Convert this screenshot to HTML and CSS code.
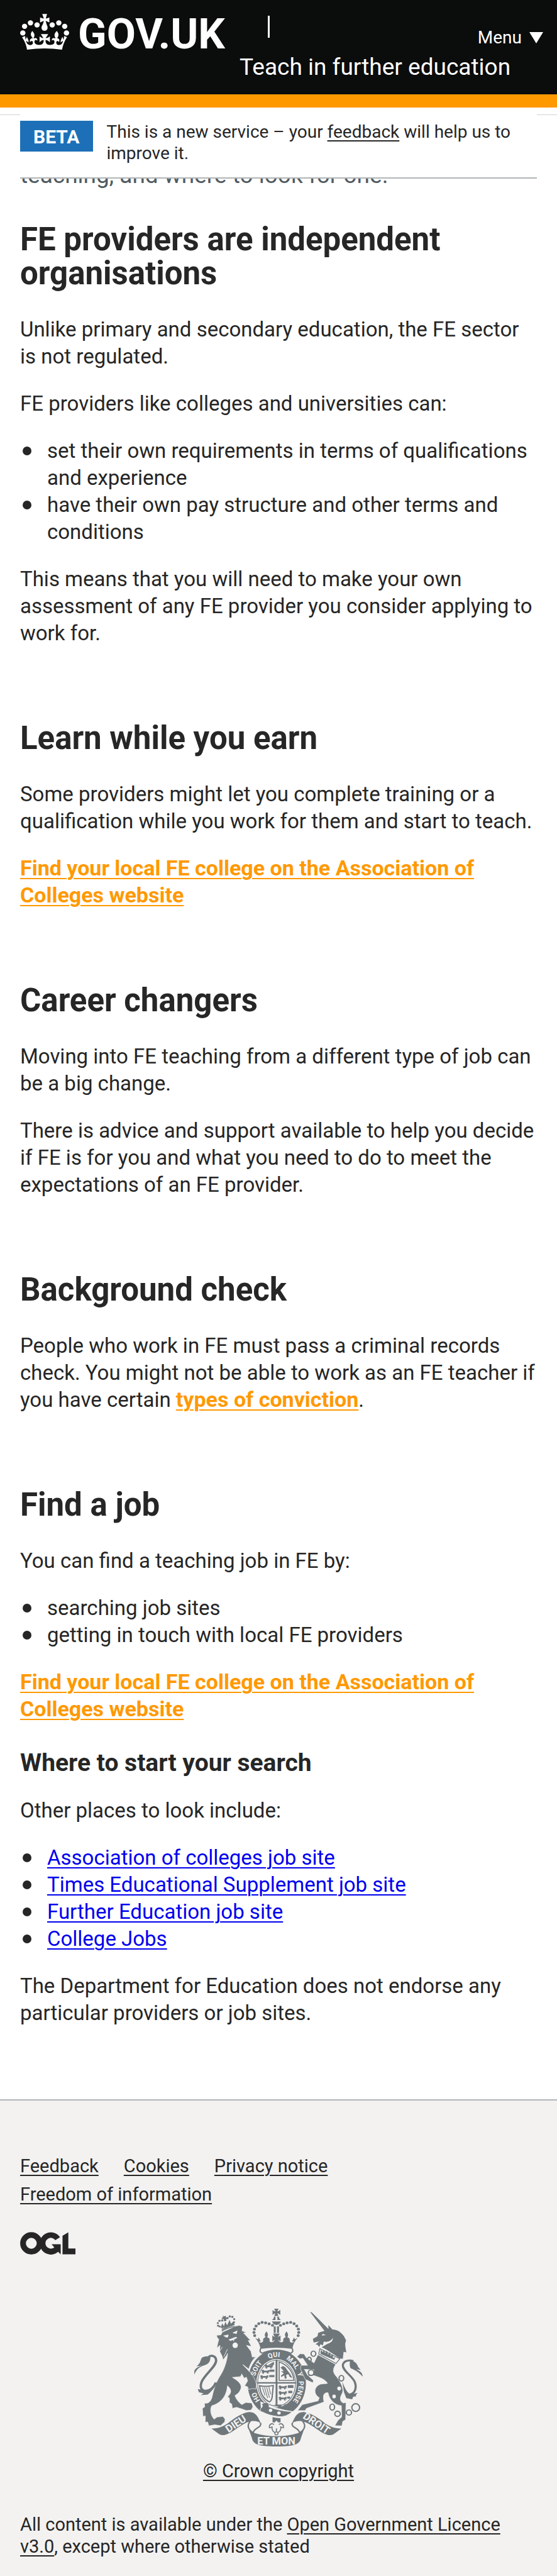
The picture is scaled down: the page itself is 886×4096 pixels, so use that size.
FILE: index.html
```html
<!DOCTYPE html>
<html lang="en">
<head>
<meta charset="utf-8">
<meta name="viewport" content="width=device-width, initial-scale=1">
<title>Teach in further education</title>
<link rel="stylesheet" href="styles.css">
</head>
<body>
<header class="header">
  <a class="logo" href="#" aria-label="GOV.UK">
    <svg class="logo-crown" viewBox="113 132 275 330" preserveAspectRatio="none" aria-hidden="true">
      <g fill="currentColor">
        <ellipse cx="138" cy="247" rx="15" ry="24"/><ellipse cx="171" cy="215" rx="15" ry="24"/><ellipse cx="208" cy="234" rx="15" ry="24"/>
        <ellipse cx="293" cy="234" rx="15" ry="24"/><ellipse cx="330" cy="215" rx="15" ry="24"/><ellipse cx="363" cy="247" rx="15" ry="24"/>
        <ellipse cx="128" cy="308" rx="15" ry="24"/><ellipse cx="373" cy="308" rx="15" ry="24"/>
        <path d="M237 133H264L257 175Q262 176 277 166V211L256 196Q260 225 266 248C270 272 262 288 250 288S230 272 234 248Q243 225 246 196L225 211V166Q240 176 246 175Z"/>
        <path d="M124 347L141 336L144 372L151 343L160 377L160 395L146 380C150 410 160 420 170 420C184 420 188 400 183 386C178 380 172 384 169 392C165 375 170 362 178 357L185 358C170 330 170 315 181 290C195 315 197 330 188 358C200 350 212 354 209 379C204 370 196 370 194 382C190 405 205 418 218 418C240 418 246 400 245 372C236 370 228 385 222 394V339C230 350 238 356 244 356L229 318H271L256 356C264 356 272 350 280 339V394C274 385 264 370 256 372C254 400 262 418 280 418C300 418 308 405 305 382C302 370 296 370 291 379C288 354 300 350 312 358C303 330 303 315 319 290C330 315 332 330 320 358L324 357C332 362 336 375 331 392C328 384 322 380 318 386C312 400 318 420 330 420C342 420 350 410 354 380L340 395L341 377L350 343L357 372L360 336L376 346Q355 400 348 462Q250 438 152 462Q146 400 124 347Z"/>
      </g>
    </svg>
    <span class="logo-text">GOV.UK</span>
  </a>
  <span class="divider"></span>
  <button class="menu" type="button">Menu
    <svg class="menu-arrow" viewBox="0 0 22 18" aria-hidden="true"><path d="M0 0H22L11 18Z" fill="currentColor"/></svg>
  </button>
  <a class="service" href="#">Teach in further education</a>
</header>

<div class="phase">
  <div class="phase-banner">
    <strong class="phase-tag">BETA</strong>
    <p class="phase-text">This is a new service – your <a href="#">feedback</a> will help us to<br>improve it.</p>
  </div>
</div>

<main class="main">
  <p class="lead">teaching, and where to look for one.</p>

  <section class="section">
    <h2>FE providers are independent organisations</h2>
    <p>Unlike primary and secondary education, the FE sector<br>is not regulated.</p>
    <p>FE providers like colleges and universities can:</p>
    <ul>
      <li>set their own requirements in terms of qualifications<br>and experience</li>
      <li>have their own pay structure and other terms and<br>conditions</li>
    </ul>
    <p>This means that you will need to make your own<br>assessment of any FE provider you consider applying to<br>work for.</p>
  </section>

  <section class="section">
    <h2>Learn while you earn</h2>
    <p>Some providers might let you complete training or a<br>qualification while you work for them and start to teach.</p>
    <p><a class="strong-link" href="#">Find your local FE college on the Association of<br>Colleges website</a></p>
  </section>

  <section class="section">
    <h2>Career changers</h2>
    <p>Moving into FE teaching from a different type of job can<br>be a big change.</p>
    <p>There is advice and support available to help you decide<br>if FE is for you and what you need to do to meet the<br>expectations of an FE provider.</p>
  </section>

  <section class="section">
    <h2>Background check</h2>
    <p>People who work in FE must pass a criminal records<br>check. You might not be able to work as an FE teacher if<br>you have certain <a class="strong-link" href="#">types of conviction</a>.</p>
  </section>

  <section class="section">
    <h2>Find a job</h2>
    <p>You can find a teaching job in FE by:</p>
    <ul>
      <li>searching job sites</li>
      <li>getting in touch with local FE providers</li>
    </ul>
    <p><a class="strong-link" href="#">Find your local FE college on the Association of<br>Colleges website</a></p>
    <h3>Where to start your search</h3>
    <p>Other places to look include:</p>
    <ul>
      <li><a href="#">Association of colleges job site</a></li>
      <li><a href="#">Times Educational Supplement job site</a></li>
      <li><a href="#">Further Education job site</a></li>
      <li><a href="#">College Jobs</a></li>
    </ul>
    <p>The Department for Education does not endorse any<br>particular providers or job sites.</p>
  </section>
</main>

<footer class="footer">
  <nav class="footer-links">
    <a href="#">Feedback</a>
    <a href="#">Cookies</a>
    <a href="#">Privacy notice</a>
    <a href="#">Freedom of information</a>
  </nav>
  <svg class="ogl" viewBox="187 147 514 207" role="img" aria-label="Open Government Licence">
    <circle cx="291" cy="250.500" r="77" fill="none" stroke="currentColor" stroke-width="53"/>
    <path fill="currentColor" d="M558 194A103.500 103.500 0 1 0 540 330L564 353V259H479L505 288A50 50 0 1 1 514 222ZM581 181L635 148V298H701V352H581Z"/>
  </svg>
  <a class="crown" href="#">
    <svg class="crest" viewBox="72 75 1563 1278" aria-hidden="true">
      <defs>
        <path id="garter" d="M705 950A205 242 0 1 1 969 950"/>
        <g id="ribbon">
          <path d="M212 1187Q280 1190 350 1140Q460 1040 535 1033C590 1035 605 1070 637 1150L615 1125Q565 1112 545 1120C460 1140 400 1230 320 1248Q295 1250 280 1240Z"/>
          <path d="M545 1115C508 1160 525 1195 568 1227C570 1180 645 1180 630 1135" fill="none" stroke="#6f777b" stroke-width="12"/>
        </g>
        <path id="walker" d="M0 10l14-10 12 10h26l12-8 12 8-10 8 8 10-16-4 4 14-14-2v-10H24v10l-16 4 6-12-14 2 8-10z"/>
      </defs>
      <g transform="scale(1.0905 1)" fill="#6f777b">
        <ellipse cx="768" cy="766" rx="248" ry="312"/>
        <ellipse cx="766" cy="766" rx="172" ry="224" fill="#f3f2f1"/>
        <ellipse cx="766" cy="766" rx="161" ry="212" fill="none" stroke="#6f777b" stroke-width="6"/>
        <path d="M758 548h16v425h-16zM598 756h336v14H598z"/>
        <use href="#walker" x="664" y="592"/><use href="#walker" x="636" y="640"/><use href="#walker" x="625" y="690"/>
        <path d="M690 600l54-34v30zM708 640h40v20h-40zM704 690h44v20h-44z"/>
        <use href="#walker" x="782" y="786"/><use href="#walker" x="782" y="838"/><use href="#walker" x="782" y="890"/>
        <path d="M862 784h48v26h-48zM866 836h34v22h-34zM858 890h24v20h-24z"/>
        <path d="M788 568V740H914C910 670 870 600 788 568Z" fill="none" stroke="#6f777b" stroke-width="9"/>
        <path d="M800 620l22-14 20 14 18 30 20 28 22 40-24-10-10-24-20 4 4 34-16 2-4-30-26 14-2-12 24-22-24-18 24-2z"/>
        <path d="M622 790Q670 802 738 788L728 900Q722 930 706 940Q630 900 622 790Z" fill="none" stroke="#6f777b" stroke-width="11"/>
        <path d="M646 805L668 880M664 805L690 905M682 805L706 900M700 800L716 870" stroke="#6f777b" stroke-width="6"/>
        <path d="M628 935Q760 1010 925 1030L895 1080H640Z" fill="#f3f2f1"/>
        <path d="M640 960C690 920 710 970 700 985Q790 1025 898 1030Q850 1085 775 1075Q700 1065 650 1035Q620 1030 630 1000Q655 985 640 960Z" stroke="#f3f2f1" stroke-width="5"/>
        <path d="M745 965h66l-12 32zM812 995l26-35 80 40-18 18Z"/>
        <circle cx="715" cy="1018" r="15" fill="#f3f2f1"/><circle cx="787" cy="1042" r="15" fill="#f3f2f1"/>

        <path d="M745 75h38l-10 24q10 2 25-14v48q-14-16-26-15l10 24h-36l10-24q-12 0-24 15V86q14 16 26 14z"/>
        <path d="M725 180q15-5 20-32h12v32zM773 148h12q3 22 18 32h-30zM727 193h76c-6 18-20 32-38 32s-32-14-38-32zM742 238h17v62h-17zM770 238h17v62h-17z"/>
        <circle cx="732" cy="229" r="13"/><circle cx="703" cy="215" r="13"/><circle cx="673" cy="206" r="13"/><circle cx="643" cy="202" r="13"/><circle cx="615" cy="213" r="13"/><circle cx="592" cy="236" r="13"/><circle cx="578" cy="264" r="13"/><circle cx="574" cy="295" r="13"/><circle cx="580" cy="325" r="13"/>
        <circle cx="799" cy="229" r="13"/><circle cx="827" cy="215" r="13"/><circle cx="856" cy="206" r="13"/><circle cx="886" cy="202" r="13"/><circle cx="915" cy="213" r="13"/><circle cx="938" cy="236" r="13"/><circle cx="952" cy="264" r="13"/><circle cx="955" cy="295" r="13"/><circle cx="950" cy="325" r="13"/>
        <path d="M584 345l24 14 6-18 18 38-18 2q20 20 38-2-6-30 18-38h2q-16-24 8-56 22 32 6 56 28 4 20 38 28 22 46-16l-22 16v-56l22 16-16-34h58l-16 34 22-16v56l-22-16q18 38 46 16-8-34 20-38-16-24 6-56 24 32 8 56h2q24 8 18 38 18 22 38 2l-18-2 18-38 6 18 24-14Q910 390 902 438Q765 420 628 438Q620 390 584 345Z"/>
        <path d="M632 442Q765 420 898 442Q915 470 888 488Q765 432 642 488Q615 470 632 442Z" fill="#f3f2f1" stroke="#6f777b" stroke-width="11"/>

        <path stroke="#f3f2f1" stroke-width="4" d="M305 292L292 318 255 322 262 345 275 358 265 400 258 440 285 415 282 470 305 520 310 550 340 510 350 490C345 560 320 640 290 690C260 740 240 790 222 870C215 910 205 940 180 950L152 953 155 985 135 1000 140 1075 160 1070 160 1130 180 1125 190 1162 240 1152 290 1160 325 1125 328 1100 310 1075 260 1080 235 1100C200 1060 200 1000 215 975C280 955 340 900 348 790C380 820 390 850 350 890L365 905 365 945 385 960 390 1000 425 990 470 1005 510 1020 550 1015 565 985 555 950 505 945 470 965C440 940 420 910 412 880C450 860 475 810 460 780C445 745 400 720 390 712L460 705 470 680 490 720 510 710 520 745 495 790 520 800 530 825 560 815 590 820 595 780C585 730 570 700 540 665L480 595 530 635C540 590 560 550 590 520L560 525 548 470 510 415 552 425 525 370 545 370 485 300 512 295 472 280 478 240 450 230 420 235Z"/>
        <path d="M312 325L358 314 352 342 335 340ZM390 298L434 276 426 308 410 306ZM356 362L420 336 432 345 402 362 408 380 392 366 375 374Z" fill="#f3f2f1"/>
        <ellipse cx="414" cy="414" rx="23" ry="26" fill="#f3f2f1"/><path d="M480 595L545 660M270 490L305 430M318 520L348 450" stroke="#f3f2f1" stroke-width="5"/>
        <path d="M250 760C230 810 200 835 160 838C115 830 115 790 130 750C160 680 252 610 252 555C250 512 210 500 185 525" fill="none" stroke="#6f777b" stroke-width="20"/>
        <path d="M202 520C205 560 190 590 150 600C110 615 85 635 66 688V650C80 625 100 612 130 602L85 610C120 580 115 560 130 530C150 515 180 515 202 520ZM95 820L160 830 210 820 262 750C240 810 205 850 180 872L120 878 145 862 105 850Z"/>
        <path d="M300 282Q350 250 410 240M300 268Q350 240 408 222" fill="none" stroke="#6f777b" stroke-width="10"/>
        <path d="M290 250l14-40 14 28 12-40 16 30 20-50 12 36 24-24 6 32-105 34zM308 140l14 6 12-8v18l14-4-6 20-14-2-6 18-8-18-14 2v-16l10 2z"/>
        <circle cx="282" cy="240" r="9"/><circle cx="268" cy="232" r="9"/><circle cx="266" cy="208" r="9"/><circle cx="280" cy="187" r="10"/><circle cx="303" cy="184" r="10"/><circle cx="328" cy="180" r="12"/><circle cx="349" cy="162" r="10"/><circle cx="368" cy="147" r="10"/><circle cx="390" cy="151" r="10"/><circle cx="406" cy="172" r="9"/><circle cx="404" cy="200" r="9"/>

        <path d="M1052 105L1065 108 1207 262 1175 282ZM1175 280L1208 262 1207 226 1242 268C1290 272 1310 290 1340 330L1358 370 1350 400 1352 430 1360 480 1337 475 1330 540 1300 535 1255 500 1190 455 1150 432 1200 400C1235 390 1245 370 1246 345C1230 375 1200 388 1168 380L1160 415 1140 405 1130 430 1115 410 1098 405 1130 378 1082 388 1075 355 1115 330 1120 300 1145 290Z"/>
        <path d="M1150 325L1160 308 1186 320Z" fill="#f3f2f1"/>
        <path d="M1125 495L1135 445 1305 540 1272 583Z" fill="#f3f2f1" stroke="#6f777b" stroke-width="7"/>
        <path d="M1140 485l4-30 14 22 10-18 12 28 14-22 10 34 18-20 4 34 20-16v36l20-10-10 26-114-54z"/>
        <path stroke="#f3f2f1" stroke-width="4" d="M1118 502L1270 592C1240 640 1245 670 1280 710C1320 770 1345 830 1320 870C1300 910 1310 940 1335 950L1357 945 1354 1105 1330 1120 1322 1162 1262 1160 1290 1110 1320 1080 1318 975C1260 970 1215 920 1205 855C1170 850 1155 880 1170 940L1020 1000 1010 1020 945 1020 985 965 1120 930 1130 900C1080 870 1080 800 1140 775L1200 768C1180 730 1140 715 1085 695L1040 700 1080 740 1075 762 1010 730 968 630 975 600 1030 600 990 535 965 540 940 520 965 493 1000 495 1020 530 1085 578Z"/>
        <path d="M1000 635L1085 640 1080 690 1030 695Z" fill="#f3f2f1"/>
        <g fill="none" stroke="#6f777b" stroke-width="11"><ellipse cx="1080" cy="492" rx="20" ry="24"/><ellipse cx="1045" cy="548" rx="16" ry="22"/><ellipse cx="1060" cy="668" rx="24" ry="26"/><ellipse cx="1318" cy="720" rx="20" ry="26"/><ellipse cx="1240" cy="988" rx="20" ry="28"/><ellipse cx="1285" cy="1050" rx="23" ry="24"/><ellipse cx="1382" cy="1038" rx="22" ry="24"/><ellipse cx="1440" cy="992" rx="33" ry="36"/></g>
        <ellipse cx="1299" cy="815" rx="16" ry="18" fill="#f3f2f1"/><ellipse cx="1256" cy="889" rx="15" ry="18" fill="#f3f2f1"/>
        <path d="M1385 872C1440 862 1450 800 1430 750C1400 690 1330 650 1330 600C1335 560 1380 545 1420 562" fill="none" stroke="#6f777b" stroke-width="18"/>
        <path d="M1390 562C1430 555 1450 580 1460 615L1482 642 1445 636C1480 655 1499 670 1499 705C1470 670 1430 640 1400 630C1385 610 1390 590 1390 562ZM1325 750C1350 820 1370 860 1400 870L1455 855 1440 880 1445 888 1418 892 1410 915 1360 905 1340 850Z"/>

        <use href="#ribbon"/><use href="#ribbon" transform="translate(1530 0) scale(-1 1)"/>
        <path d="M522 1170Q530 1215 575 1227Q765 1290 955 1227Q1000 1210 1008 1170L975 1270C965 1330 930 1353 765 1353S565 1330 555 1270Z"/>
        <path d="M732 1080Q765 1092 800 1090V1130H732Z"/>
        <path d="M765 1112C735 1145 745 1160 758 1182H772C788 1160 795 1145 765 1112Z" fill="#f3f2f1"/>
        <path d="M745 1150C720 1130 700 1155 706 1180L728 1172C722 1200 740 1225 765 1225S808 1200 802 1172L824 1180C830 1155 810 1130 785 1150M765 1185V1220" fill="none" stroke="#6f777b" stroke-width="9"/>
        <circle cx="765" cy="1232" r="14" fill="#f3f2f1" stroke="#6f777b" stroke-width="8"/>
      </g>
      <g class="crest-text">
        <text><textPath href="#garter" startOffset="3%">HO</textPath></text>
        <text><textPath href="#garter" startOffset="24%">SOIT</textPath></text>
        <text><textPath href="#garter" startOffset="43%">QUI</textPath></text>
        <text><textPath href="#garter" startOffset="58%">MAL</textPath></text>
        <text><textPath href="#garter" startOffset="73%">Y</textPath></text>
        <text><textPath href="#garter" startOffset="80%">PENSE</textPath></text>
      </g>
      <g class="crest-motto">
        <text transform="translate(476 1170) rotate(-34)">DIEU</text>
        <text x="834" y="1338">ET MON</text>
        <text transform="translate(1188 1164) rotate(34)">DROIT</text>
      </g>
    </svg>
    <span>© Crown copyright</span>
  </a>
  <p class="licence">All content is available under the <a href="#">Open Government Licence<br>v3.0</a>, except where otherwise stated</p>
</footer>
</body>
</html>
```

FILE: styles.css
```css
* {
  box-sizing: border-box;
}

body {
  margin: 0;
  background: #fff;
  color: #262626;
  font-family: Roboto, "Liberation Sans", sans-serif;
  font-size: 33px;
  line-height: 43px;
}

p,
h2,
h3,
ul {
  margin: 0;
}

a {
  text-decoration-thickness: 2px;
  text-underline-offset: 4px;
}

/* Header */

.header {
  display: grid;
  grid-template-columns: 349px 1fr auto;
  grid-template-rows: 85px 65px;
  padding: 0 22px 0 32px;
  background: #0b0c0c;
  color: #fff;
}

.logo {
  display: flex;
  gap: 14px;
  padding-top: 22px;
  color: inherit;
  text-decoration: none;
}

.logo-crown {
  width: 78px;
  height: 57px;
}

.logo-text {
  font-size: 67px;
  font-weight: 700;
  line-height: 64px;
}

.divider {
  width: 3px;
  height: 35px;
  margin: 25px 0 0 45px;
  background: #fff;
}

.menu {
  display: flex;
  align-items: center;
  align-self: start;
  gap: 12px;
  margin-top: 43px;
  padding: 0;
  border: 0;
  background: none;
  color: inherit;
  font: inherit;
  font-size: 28px;
  line-height: 34px;
}

.menu-arrow {
  width: 22px;
  height: 18px;
}

.service {
  grid-column: 2 / 4;
  color: inherit;
  font-size: 37px;
  line-height: 43px;
  text-decoration: none;
  white-space: nowrap;
}

/* Phase banner */

.phase {
  position: relative;
  border-top: 21px solid #f90;
}

.phase::before {
  content: "";
  position: absolute;
  top: 11px;
  left: 0;
  right: 0;
  height: 1px;
  background: #d0d2d3;
}

.phase-banner {
  position: relative;
  display: flex;
  align-items: flex-start;
  gap: 22px;
  margin: 0 32px;
  padding: 21px 0;
  border-bottom: 2px solid #b1b4b6;
  background: #fff;
}

.phase-tag {
  padding: 2px 21px 0;
  background: #1d70b8;
  color: #fff;
  font-size: 30px;
  line-height: 47px;
}

.phase-text {
  padding-top: 1px;
  font-size: 28px;
  line-height: 34px;
}

.phase-text a {
  color: inherit;
}

/* Content */

.main {
  padding: 0 22px 116px 32px;
}

.lead {
  margin: -32px 0 49px;
  color: #505a5f;
  font-size: 37px;
  line-height: 53px;
}

.section + .section {
  margin-top: 119px;
}

.section h2 {
  margin-bottom: 40px;
  font-size: 51px;
  line-height: 54px;
}

.section h3 {
  margin: 43px 0 32px;
  font-size: 39px;
  line-height: 43px;
}

.section p + p,
.section p + ul,
.section ul + p {
  margin-top: 32px;
}

.section ul {
  padding: 0;
  list-style: none;
}

.section li {
  position: relative;
  padding-left: 43px;
}

.section li::before {
  content: "";
  position: absolute;
  top: 15px;
  left: 4px;
  width: 14px;
  height: 14px;
  border-radius: 50%;
  background: #262626;
}

.section li a {
  color: #00e;
}

.strong-link {
  color: #f90;
  font-size: 34px;
  font-weight: 700;
}

/* Footer */

.footer {
  padding: 82px 32px 30px;
  border-top: 2px solid #b1b4b6;
  background: #f3f2f1;
  font-size: 29px;
  line-height: 35px;
}

.footer a {
  color: inherit;
}

.footer-links {
  display: flex;
  flex-wrap: wrap;
  column-gap: 40px;
  max-width: 640px;
  line-height: 45px;
}

.ogl {
  display: block;
  width: 88px;
  height: 36px;
  margin-top: 37px;
}

.crown {
  display: flex;
  flex-direction: column;
  align-items: center;
  gap: 22px;
  margin-top: 86px;
}

.crest {
  width: 268px;
  height: 219px;
}

.crest-text,
.crest-motto {
  fill: #f3f2f1;
  font-weight: 700;
}

.crest-text {
  font-size: 64px;
}

.crest-motto {
  font-size: 96px;
  text-anchor: middle;
}

.licence {
  margin-top: 50px;
}
```
